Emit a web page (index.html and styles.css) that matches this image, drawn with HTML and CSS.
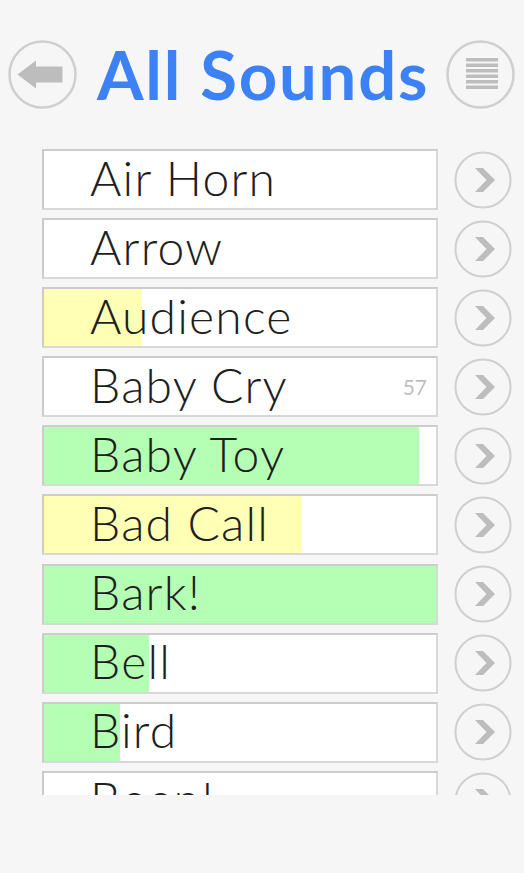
FILE: index.html
```html
<!DOCTYPE html>
<html>
<head>
<meta charset="utf-8">
<link rel="stylesheet" href="styles.css">
</head>
<body>
<div class="screen">
  <header class="header">
    <button class="round back" aria-label="Back">
      <svg width="69" height="69" viewBox="0 0 69 69">
        <circle cx="34.5" cy="34.5" r="33" fill="none" stroke="#cfcfcf" stroke-width="2.5"/>
        <path d="M9.5 34.5 L28 20.5 L28 26.5 L54.5 26.5 L54.5 42.5 L28 42.5 L28 48.5 Z" fill="#bdbdbd"/>
      </svg>
    </button>
    <h1 class="title">All Sounds</h1>
    <button class="round menu" aria-label="Menu">
      <svg width="69" height="69" viewBox="0 0 69 69">
        <circle cx="34.5" cy="34.5" r="33" fill="none" stroke="#cfcfcf" stroke-width="2.5"/>
        <g fill="#bdbdbd">
          <rect x="20" y="18" width="32" height="3.5"/>
          <rect x="20" y="23.5" width="32" height="3.5"/>
          <rect x="20" y="29" width="32" height="3.5"/>
          <rect x="20" y="34.5" width="32" height="3.5"/>
          <rect x="20" y="40" width="32" height="3.5"/>
          <rect x="20" y="45.5" width="32" height="3.5"/>
        </g>
      </svg>
    </button>
  </header>
  <div class="list">
    <div class="row"><div class="box"><span class="label">Air Horn</span></div><button class="go"><svg width="58" height="58" viewBox="0 0 58 58"><circle cx="29" cy="29" r="27.5" fill="none" stroke="#cfcfcf" stroke-width="2"/><path d="M21 17 L29 17 L41 29 L29 41 L21 41 L32.5 29 Z" fill="#bdbdbd"/></svg></button></div>
    <div class="row"><div class="box"><span class="label">Arrow</span></div><button class="go"><svg width="58" height="58" viewBox="0 0 58 58"><circle cx="29" cy="29" r="27.5" fill="none" stroke="#cfcfcf" stroke-width="2"/><path d="M21 17 L29 17 L41 29 L29 41 L21 41 L32.5 29 Z" fill="#bdbdbd"/></svg></button></div>
    <div class="row"><div class="box"><div class="fill yellow" style="width:98px"></div><span class="label">Audience</span></div><button class="go"><svg width="58" height="58" viewBox="0 0 58 58"><circle cx="29" cy="29" r="27.5" fill="none" stroke="#cfcfcf" stroke-width="2"/><path d="M21 17 L29 17 L41 29 L29 41 L21 41 L32.5 29 Z" fill="#bdbdbd"/></svg></button></div>
    <div class="row"><div class="box"><span class="label">Baby Cry</span><span class="count">57</span></div><button class="go"><svg width="58" height="58" viewBox="0 0 58 58"><circle cx="29" cy="29" r="27.5" fill="none" stroke="#cfcfcf" stroke-width="2"/><path d="M21 17 L29 17 L41 29 L29 41 L21 41 L32.5 29 Z" fill="#bdbdbd"/></svg></button></div>
    <div class="row"><div class="box"><div class="fill green" style="width:375px"></div><span class="label">Baby Toy</span></div><button class="go"><svg width="58" height="58" viewBox="0 0 58 58"><circle cx="29" cy="29" r="27.5" fill="none" stroke="#cfcfcf" stroke-width="2"/><path d="M21 17 L29 17 L41 29 L29 41 L21 41 L32.5 29 Z" fill="#bdbdbd"/></svg></button></div>
    <div class="row"><div class="box"><div class="fill yellow" style="width:258px"></div><span class="label">Bad Call</span></div><button class="go"><svg width="58" height="58" viewBox="0 0 58 58"><circle cx="29" cy="29" r="27.5" fill="none" stroke="#cfcfcf" stroke-width="2"/><path d="M21 17 L29 17 L41 29 L29 41 L21 41 L32.5 29 Z" fill="#bdbdbd"/></svg></button></div>
    <div class="row"><div class="box"><div class="fill green" style="width:100%"></div><span class="label">Bark!</span></div><button class="go"><svg width="58" height="58" viewBox="0 0 58 58"><circle cx="29" cy="29" r="27.5" fill="none" stroke="#cfcfcf" stroke-width="2"/><path d="M21 17 L29 17 L41 29 L29 41 L21 41 L32.5 29 Z" fill="#bdbdbd"/></svg></button></div>
    <div class="row"><div class="box"><div class="fill green" style="width:105px"></div><span class="label">Bell</span></div><button class="go"><svg width="58" height="58" viewBox="0 0 58 58"><circle cx="29" cy="29" r="27.5" fill="none" stroke="#cfcfcf" stroke-width="2"/><path d="M21 17 L29 17 L41 29 L29 41 L21 41 L32.5 29 Z" fill="#bdbdbd"/></svg></button></div>
    <div class="row"><div class="box"><div class="fill green" style="width:76px"></div><span class="label">Bird</span></div><button class="go"><svg width="58" height="58" viewBox="0 0 58 58"><circle cx="29" cy="29" r="27.5" fill="none" stroke="#cfcfcf" stroke-width="2"/><path d="M21 17 L29 17 L41 29 L29 41 L21 41 L32.5 29 Z" fill="#bdbdbd"/></svg></button></div>
    <div class="row"><div class="box"><span class="label">Beep!</span></div><button class="go"><svg width="58" height="58" viewBox="0 0 58 58"><circle cx="29" cy="29" r="27.5" fill="none" stroke="#cfcfcf" stroke-width="2"/><path d="M21 17 L29 17 L41 29 L29 41 L21 41 L32.5 29 Z" fill="#bdbdbd"/></svg></button></div>
  </div>
</div>
</body>
</html>
```

FILE: styles.css
```css
* { box-sizing: border-box; }
html, body {
  margin: 0;
  padding: 0;
  background: #f6f6f6;
  width: 524px;
  height: 873px;
  overflow: hidden;
}
.screen {
  width: 524px;
  height: 873px;
  display: flex;
  flex-direction: column;
}
.header {
  display: flex;
  align-items: center;
  height: 112px;
  padding: 37px 0 0 8px;
}
.round {
  border: 0;
  padding: 0;
  background: transparent;
  width: 69px;
  height: 69px;
  display: block;
}
.round svg { display: block; }
.title {
  margin: 0 0 0 20px;
  width: 349px;
  font-family: "Lato", sans-serif;
  font-weight: 700;
  font-size: 67px;
  line-height: 69px;
  color: #3d82f4;
  letter-spacing: 1.8px;
  white-space: nowrap;
}
.list {
  margin-top: 37px;
  height: 646px;
  overflow: hidden;
  padding-left: 42px;
  display: flex;
  flex-direction: column;
  gap: 8.1px;
}
.row {
  display: flex;
  align-items: center;
  flex: none;
  height: 61px;
}
.box {
  position: relative;
  width: 396px;
  height: 61px;
  background: #ffffff;
  border: 2px solid #d8d8d8;
  border-top-color: #cccccc;
  border-left-color: #cccccc;
  display: flex;
  align-items: center;
  overflow: hidden;
}
.fill {
  position: absolute;
  left: 0;
  top: 0;
  bottom: 0;
}
.yellow { background: #ffffb5; }
.green { background: #b4ffb4; }
.label {
  position: relative;
  margin-left: 46px;
  margin-top: -4px;
  font-family: "Lato", sans-serif;
  font-weight: 300;
  font-size: 48px;
  letter-spacing: 1.2px;
  color: #1e1e1e;
  line-height: 1;
  white-space: nowrap;
}
.count {
  position: absolute;
  right: 9px;
  top: 16px;
  font-family: "Lato", sans-serif;
  font-size: 21px;
  color: #bfbfbf;
}
.go {
  border: 0;
  padding: 0;
  background: transparent;
  width: 58px;
  height: 58px;
  margin-left: 16px;
}
.go svg { display: block; }
```
